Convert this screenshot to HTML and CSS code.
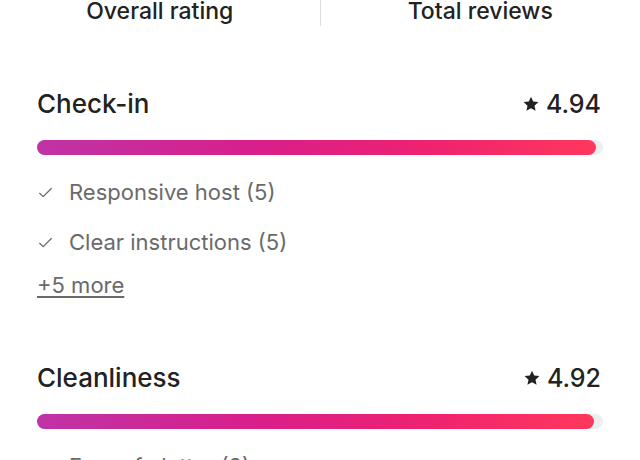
FILE: index.html
```html
<!DOCTYPE html>
<html lang="en">
<head>
    <meta charset="UTF-8">
    <meta name="viewport" content="width=device-width, initial-scale=1.0">
    <title>Reviews</title>
    <link rel="stylesheet" href="styles.css">
</head>
<body>
    <div class="summary">
        <div class="summary-col">Overall rating</div>
        <div class="summary-col">Total reviews</div>
    </div>
    <div class="categories">
        <div class="category">
            <div class="category-head">
                <h2>Check-in</h2>
                <div class="score">
                    <svg class="star" viewBox="0 0 32 32"><path d="M16 1.5l4.4 9.6 10.4 1.1-7.8 7.1 2.2 10.3L16 24.3l-9.2 5.3 2.2-10.3-7.8-7.1 10.4-1.1z"/></svg>
                    <span>4.94</span>
                </div>
            </div>
            <div class="track"><div class="fill" style="width: 98.8%"></div></div>
            <ul class="tags">
                <li>
                    <svg class="check" viewBox="0 0 16 16"><path d="M1.5 8.5l4 4 9-9"/></svg>
                    Responsive host (5)
                </li>
                <li>
                    <svg class="check" viewBox="0 0 16 16"><path d="M1.5 8.5l4 4 9-9"/></svg>
                    Clear instructions (5)
                </li>
            </ul>
            <a class="more" href="#">+5 more</a>
        </div>
        <div class="category">
            <div class="category-head">
                <h2>Cleanliness</h2>
                <div class="score">
                    <svg class="star" viewBox="0 0 32 32"><path d="M16 1.5l4.4 9.6 10.4 1.1-7.8 7.1 2.2 10.3L16 24.3l-9.2 5.3 2.2-10.3-7.8-7.1 10.4-1.1z"/></svg>
                    <span>4.92</span>
                </div>
            </div>
            <div class="track"><div class="fill" style="width: 98.4%"></div></div>
            <ul class="tags">
                <li>
                    <svg class="check" viewBox="0 0 16 16"><path d="M1.5 8.5l4 4 9-9"/></svg>
                    Free of clutter (3)
                </li>
            </ul>
        </div>
    </div>
</body>
</html>
```

FILE: styles.css
```css
body {
    font-family: Inter, 'Noto Sans', sans-serif;
    background-color: #ffffff;
    color: #222222;
    margin: 0;
    padding: 0;
}
.summary {
    display: flex;
    height: 26px;
}
.summary-col {
    flex: 1;
    text-align: center;
    font-size: 23px;
    font-weight: 500;
    line-height: 22px;
    color: #222222;
}
.summary-col + .summary-col {
    border-left: 1px solid #dddddd;
}
.categories {
    padding: 62px 37px 0 37px;
}
.category {
    margin-bottom: 63px;
}
.category-head {
    display: flex;
    justify-content: space-between;
    align-items: center;
    height: 32px;
}
.category-head h2 {
    margin: 0;
    font-size: 26px;
    font-weight: 500;
    line-height: 32px;
}
.score {
    display: flex;
    align-items: center;
    gap: 7px;
    font-size: 25px;
    font-weight: 500;
    line-height: 32px;
    margin-right: 2px;
}
.star {
    width: 16px;
    height: 16px;
    fill: #222222;
}
.track {
    margin-top: 20px;
    height: 15px;
    border-radius: 8px;
    background-color: #eeeeee;
}
.fill {
    height: 100%;
    border-radius: 8px;
    background: linear-gradient(90deg, #bf33a6 0%, #d91f8a 40%, #ee2270 70%, #ff385c 100%);
}
.tags {
    list-style: none;
    margin: 23px 0 0 0;
    padding: 0;
}
.tags li {
    display: flex;
    align-items: center;
    height: 28px;
    font-size: 22px;
    color: #6a6a6a;
    margin-bottom: 22px;
}
.tags li:last-child {
    margin-bottom: 0;
}
.check {
    width: 15px;
    height: 15px;
    margin: 0 16px 0 1px;
    fill: none;
    stroke: #6a6a6a;
    stroke-width: 1.3;
}
.more {
    display: inline-block;
    margin-top: 15px;
    font-size: 22px;
    line-height: 28px;
    color: #6a6a6a;
    text-decoration: underline;
    text-underline-offset: 3px;
}
```
